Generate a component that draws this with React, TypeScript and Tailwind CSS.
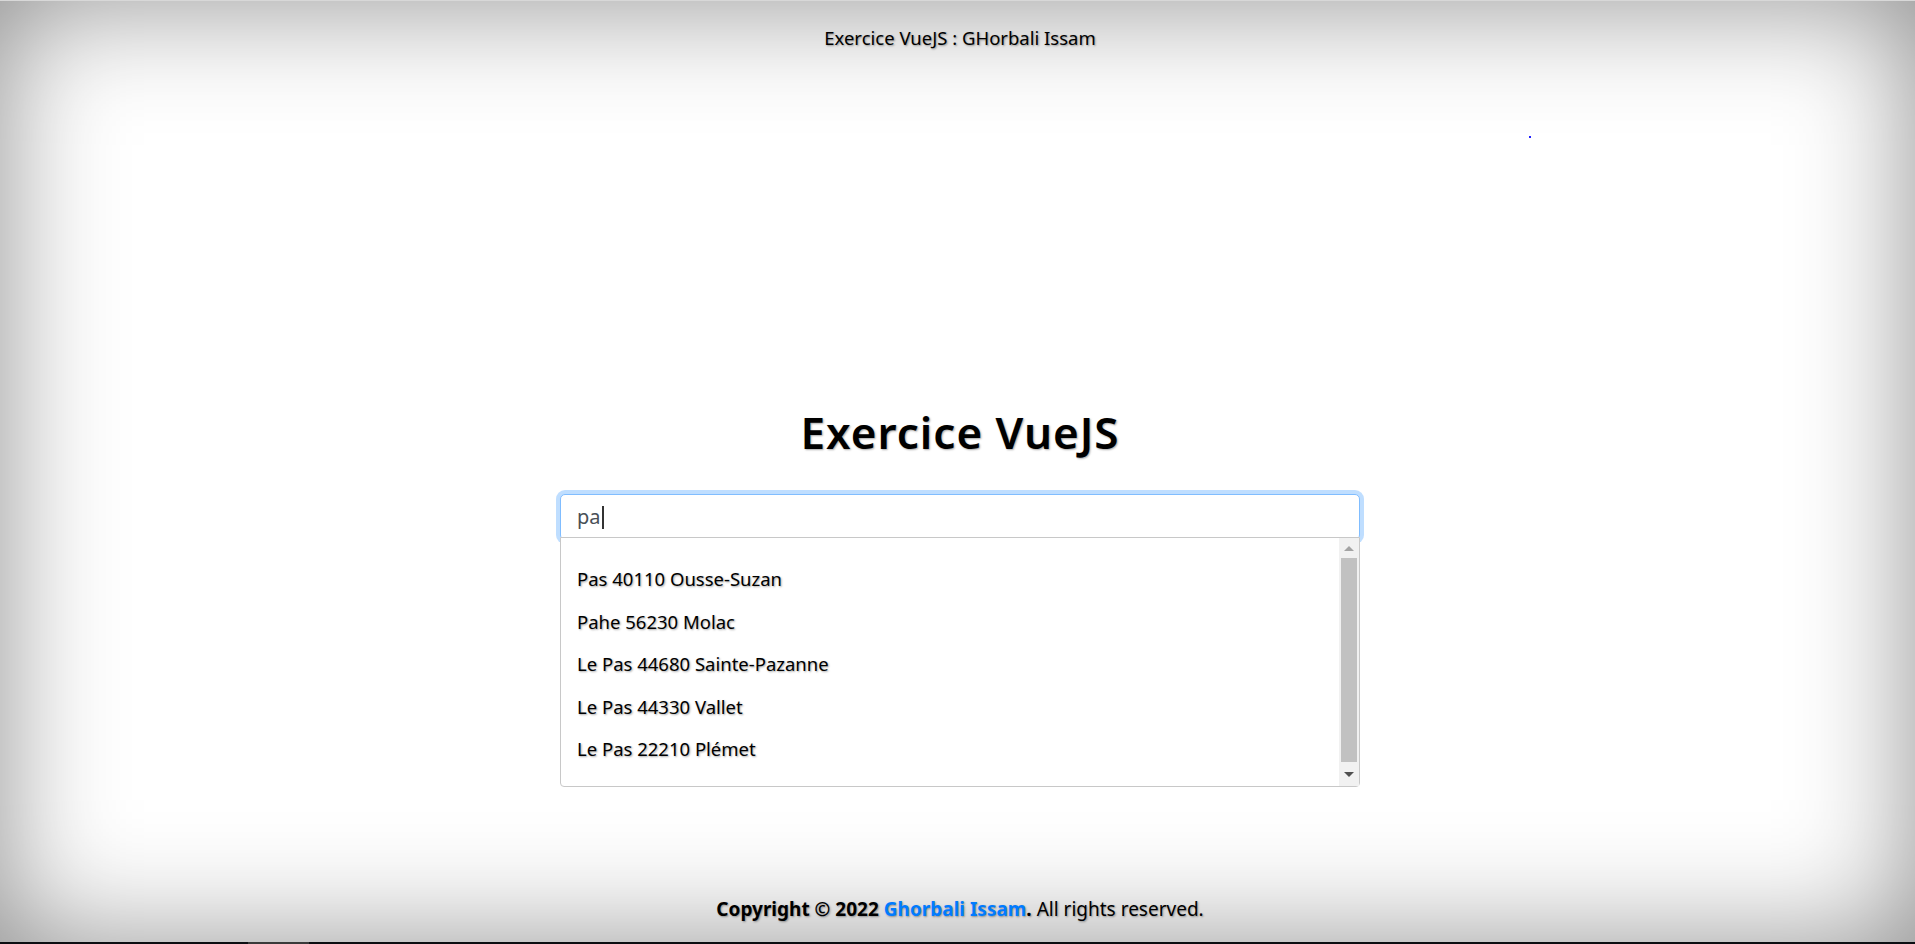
import React from "react";

const CITIES = [
  "Pas 40110 Ousse-Suzan",
  "Pahe 56230 Molac",
  "Le Pas 44680 Sainte-Pazanne",
  "Le Pas 44330 Vallet",
  "Le Pas 22210 Plémet",
];

export default function App() {
  return (
    <div className="relative flex h-[944px] flex-col overflow-hidden border-t border-[#d8d8d8] bg-white pl-[5px] font-['Noto_Sans',sans-serif] text-black shadow-[inset_0_0_120px_rgba(0,0,0,0.45)]">
      {/* en-tête */}
      <header className="flex h-[73px] items-center justify-center text-[18.5px] [text-shadow:1px_1px_2px_rgba(0,0,0,0.35)]">
        Exercice VueJS : GHorbali Issam
      </header>

      <span className="absolute left-[1529px] top-[135px] h-[2px] w-[2px] bg-[#2020ff]" />

      <main className="flex flex-1 flex-col items-center pt-[334px]">
        <h1 className="text-[44px] font-semibold leading-[48px] tracking-[1px] [text-shadow:1px_1px_2px_rgba(0,0,0,0.35)]">
          Exercice VueJS
        </h1>

        <div className="relative mt-[38px] w-[800px]">
          <div className="flex h-[46px] items-center rounded-[5px] border border-[#80bdff] bg-white px-[16px] shadow-[0_0_0_4px_rgba(0,123,255,0.25)]">
            <span className="text-[20px] text-[#495057]">pa</span>
            <span className="ml-[1px] h-[23px] w-[2px] bg-[#333]" />
          </div>

          {/* liste des suggestions */}
          <div className="absolute left-0 right-0 top-[43px] flex h-[250px] rounded-b-[4px] border border-[#c8c8c8] bg-white">
            <ul className="flex-1 pt-[20px] pl-[16px] text-[18.5px] [text-shadow:1px_1px_2px_rgba(0,0,0,0.35)]">
              {CITIES.map((c) => (
                <li key={c} className="flex h-[42.5px] items-center">
                  {c}
                </li>
              ))}
            </ul>
            <div className="flex w-[20px] flex-col items-center bg-[#f1f1f1] px-[2px]">
              <div className="flex h-[20px] items-center justify-center">
                <span className="h-0 w-0 border-x-[5px] border-b-[5px] border-x-transparent border-b-[#a3a3a3]" />
              </div>
              <div className="w-full flex-1 bg-[#c1c1c1]" />
              <div className="flex h-[24px] items-center justify-center">
                <span className="h-0 w-0 border-x-[5px] border-t-[5px] border-x-transparent border-t-[#505050]" />
              </div>
            </div>
          </div>
        </div>
      </main>

      <footer className="flex h-[66px] items-center justify-center text-[19px] [text-shadow:1px_1px_2px_rgba(0,0,0,0.35)]">
        <span className="font-bold">Copyright © 2022 </span>
        <span className="ml-[5px] font-bold text-[#007bff]">Ghorbali Issam</span>
        <span className="font-bold">.</span>
        <span className="ml-[5px]">All rights reserved.</span>
      </footer>

      <div className="-ml-[5px] flex h-[2px] bg-[#0c0e12]">
        <span className="ml-[248px] w-[61px] bg-[#3a3a3a]" />
      </div>
    </div>
  );
}
